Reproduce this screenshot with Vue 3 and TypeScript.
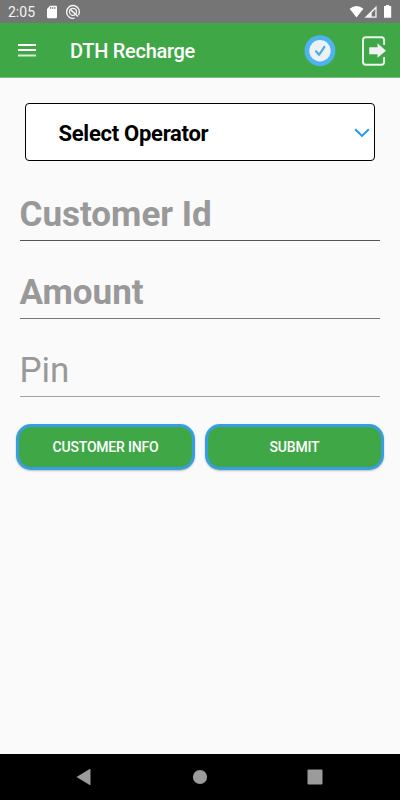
<script setup lang="ts">
import { ref } from 'vue'

interface Field {
  key: string
  label: string
  bold: boolean
}

const fields: Field[] = [
  { key: 'customer', label: 'Customer Id', bold: true },
  { key: 'amount', label: 'Amount', bold: true },
  { key: 'pin', label: 'Pin', bold: false },
]
const actions = ['Customer Info', 'Submit']
const operator = ref('Select Operator')
</script>

<template>
  <div class="screen">
    <header class="status">
      <span class="clock">2:05</span>
      <svg class="sd" width="12" height="14" viewBox="0 0 12 14">
        <path d="M4 .7h6q1 0 1 1v10.600q0 1-1 1H2q-1 0-1-1V4z" fill="#fff" />
        <path d="M4.700 2v2M6.800 2v2M8.900 2v2" stroke="#757575" stroke-width="1" />
      </svg>
      <svg class="sync" width="16" height="16" viewBox="0 0 16 16" fill="none" stroke="#f4f4f4">
        <path d="M9.500 14.200A6.400 6.400 0 1 1 13.600 11.100" stroke-width="1.400" />
        <circle cx="8" cy="7.800" r="3.500" stroke-width="1.300" />
        <path d="M5.300 5.300l7.700 7.200" stroke-width="1.600" />
      </svg>
      <svg class="signals" width="46" height="16" viewBox="0 0 46 16">
        <path d="M.6 4.700Q7.500-.5 14.400 4.700L7.500 13.600z" fill="#fff" />
        <path d="M27.600 1.700V13.700H15.400z" fill="#f2f2f2" />
        <path d="M26.300 5.100V12.500h-3.600V8.700z" fill="#757575" />
        <path d="M35 2H37V.9h3.200V2h2v11.800H35z" fill="#fff" />
      </svg>
    </header>

    <nav class="appbar">
      <svg class="menu" width="18" height="14" viewBox="0 0 18 14">
        <path d="M0 1h18M0 6h18" stroke="#fff" stroke-width="2" />
        <path d="M0 11.500h18" stroke="#d5ecd6" stroke-width="2" />
      </svg>
      <h1>DTH Recharge</h1>
      <svg class="check" width="32" height="32" viewBox="0 0 32 32">
        <circle cx="16" cy="15.700" r="15.400" fill="#4db4f1" />
        <circle cx="16" cy="15.700" r="10.700" fill="#edf1f3" />
        <path d="M12 16.300l3.100 3.500 5.300-8" fill="none" stroke="#4aa9e6" stroke-width="2.100" stroke-linecap="round" stroke-linejoin="round" />
      </svg>
      <svg class="exit" width="26" height="30" viewBox="0 0 26 30">
        <path d="M22.100 9V4q0-2.700-2.700-2.700H3.700Q1 1.300 1 4v22q0 2.700 2.700 2.700h15.700q2.700 0 2.700-2.700v-5" fill="none" stroke="#eef3ee" stroke-width="1.900" />
        <path d="M7.200 11.200h8.300V7.200l8.500 7.500-8.500 7v-3.500H7.200z" fill="#f1f1f1" />
      </svg>
    </nav>

    <main class="form">
      <button class="select" type="button">
        <span>{{ operator }}</span>
        <svg width="16" height="10" viewBox="0 0 16 10">
          <path d="M1.200 1.300L8 8l6.800-6.700" fill="none" stroke="#2196f3" stroke-width="1.900" />
        </svg>
      </button>

      <div class="fields">
        <label v-for="field in fields" :key="field.key" class="field" :class="[field.key, { bold: field.bold }]">
          <span>{{ field.label }}</span>
        </label>
      </div>

      <div class="actions">
        <button v-for="action in actions" :key="action" type="button">{{ action }}</button>
      </div>
    </main>

    <footer class="navbar">
      <svg width="16" height="18" viewBox="0 0 16 18"><path d="M.5 9L13.700 1q.8-.4.8.5v15q0 .9-.8.5z" fill="#9b9b9b" /></svg>
      <svg width="16" height="18" viewBox="0 0 16 18"><circle cx="8" cy="9" r="7.100" fill="#9b9b9b" /></svg>
      <svg width="16" height="18" viewBox="0 0 16 18"><rect x=".5" y="1.500" width="15" height="15" rx="1" fill="#9b9b9b" /></svg>
    </footer>
  </div>
</template>

<style>
body {
  margin: 0;
}
</style>

<style scoped>
.screen {
  width: 400px;
  height: 800px;
  display: flex;
  flex-direction: column;
  overflow: hidden;
  background: #fafafa;
  font-family: Roboto, sans-serif;
}
svg {
  display: block;
  flex: none;
}
.status {
  height: 23px;
  flex: none;
  display: flex;
  align-items: center;
  box-sizing: border-box;
  padding: 1px 5px 0 8px;
  background: #757575;
}
.clock {
  width: 38px;
  color: #f4f4f4;
  font-size: 14px;
  line-height: 20px;
}
.sync {
  margin-left: 7px;
}
.signals {
  margin-left: auto;
}
.appbar {
  height: 55px;
  flex: none;
  display: flex;
  align-items: center;
  box-sizing: border-box;
  padding: 1px 12px 0 18px;
  border-bottom: 1px solid #7cbf81;
  background: #40a747;
}
h1 {
  margin: 0 0 0 34px;
  padding-top: 1px;
  color: #fff;
  font-size: 20px;
  line-height: 24px;
  font-weight: 500;
  letter-spacing: -0.290px;
}
.check {
  margin-left: auto;
}
.exit {
  margin-left: 26px;
}
.form {
  flex: 1;
  padding: 25px 16px 0;
}
.select {
  width: 350px;
  height: 58px;
  display: flex;
  align-items: center;
  justify-content: space-between;
  box-sizing: border-box;
  margin: 0 auto;
  padding: 2px 4px 0 32.500px;
  border: 1px solid #000;
  border-radius: 4px;
  background: #fff;
  color: #000;
  font: 700 22px/26px Roboto, sans-serif;
  letter-spacing: -0.280px;
}
.select span {
  padding-top: 1px;
}
.fields {
  padding: 2px 4px 0;
}
.field {
  height: 78px;
  display: flex;
  align-items: flex-end;
  box-sizing: border-box;
  padding-bottom: 4px;
  border-bottom: 1px solid #555;
  color: #999;
  font-size: 35px;
  line-height: 42px;
}
.field span {
  margin-left: -0.500px;
}
.field.amount {
  border-color: #777;
}
.field.pin {
  border-color: #a5a5a5;
}
.bold {
  font-weight: 700;
}
.actions {
  display: grid;
  grid-template-columns: 1fr 1fr;
  gap: 10px;
  padding-top: 27px;
}
.actions button {
  height: 46px;
  padding: 0;
  border: 3px solid #369fe1;
  border-radius: 15px;
  background: #40a747;
  box-shadow: 0 1px 2px rgba(0, 0, 0, 0.250);
  color: #fff;
  font: 500 14px/20px Roboto, sans-serif;
  letter-spacing: -0.200px;
  text-transform: uppercase;
}
.navbar {
  height: 46px;
  flex: none;
  display: flex;
  align-items: center;
  justify-content: space-between;
  box-sizing: border-box;
  padding: 0 77px 0 76px;
  background: #000;
}
</style>
